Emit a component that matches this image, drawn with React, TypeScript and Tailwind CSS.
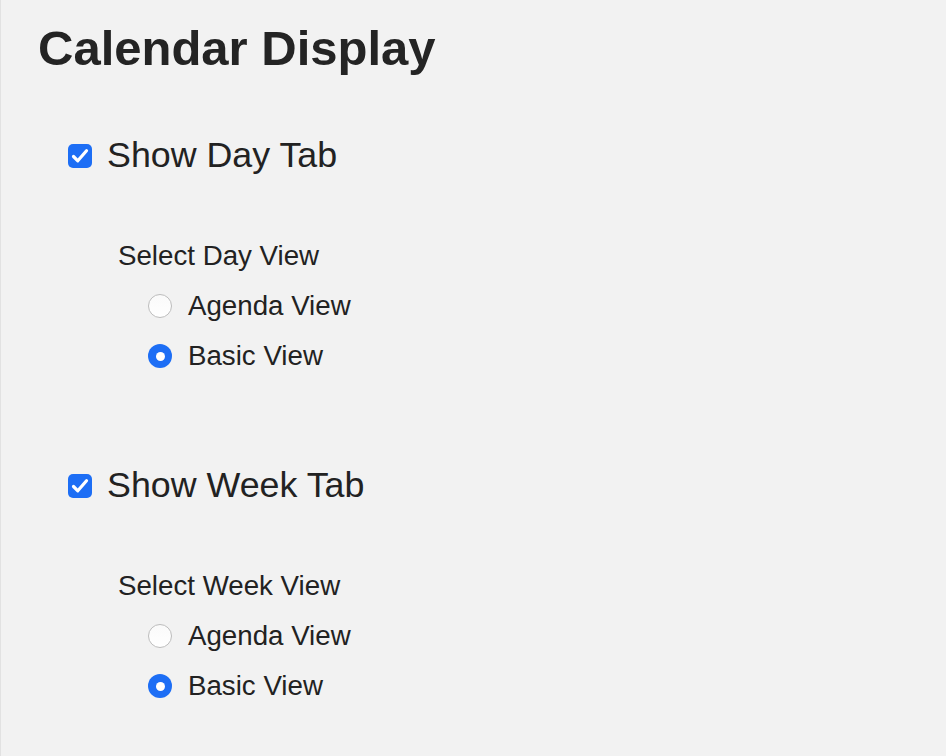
import React from "react";

const font = { fontFamily: '"Liberation Sans", Arial, Helvetica, sans-serif' };

function Checkbox() {
  return (
    <div className="w-[24px] h-[24px] rounded-[5px] bg-[#1d6ef5] flex items-center justify-center shrink-0">
      <svg width="24" height="24" viewBox="0 0 24 24" fill="none">
        <path d="M5.5 12.5 L9.8 16.8 L18.5 6.8" stroke="white" strokeWidth="3.2" strokeLinecap="round" strokeLinejoin="round" />
      </svg>
    </div>
  );
}

function Radio({ checked }: { checked: boolean }) {
  if (checked) {
    return (
      <div className="w-[24px] h-[24px] rounded-full bg-[#1d6ef5] flex items-center justify-center shrink-0">
        <div className="w-[9px] h-[9px] rounded-full bg-white" />
      </div>
    );
  }
  return (
    <div className="w-[24px] h-[24px] rounded-full bg-gradient-to-b from-[#fafafa] to-white border border-[#bdbdbd] shrink-0" />
  );
}

function Section({ title, select }: { title: string; select: string }) {
  return (
    <div>
      <div className="h-[50px] flex items-center pl-[68px]">
        <Checkbox />
        <span className="ml-[15px] text-[35.8px] text-[#222]">{title}</span>
      </div>
      <div className="mt-[50px] h-[50px] flex items-center pl-[118px]">
        <span className="text-[27.7px] text-[#222]">{select}</span>
      </div>
      <div className="h-[50px] flex items-center pl-[148px]">
        <Radio checked={false} />
        <span className="ml-[16px] text-[27.7px] text-[#222]">Agenda View</span>
      </div>
      <div className="h-[50px] flex items-center pl-[148px]">
        <Radio checked={true} />
        <span className="ml-[16px] text-[27.7px] text-[#222]">Basic View</span>
      </div>
    </div>
  );
}

export default function App() {
  return (
    <div className="min-h-screen w-full bg-[#f2f2f2] shadow-[inset_1px_0_0_#e2e2e2]" style={font}>
      <div className="h-[96px] flex items-center pl-[38px]">
        <h1 className="text-[49px] font-bold text-[#242424] leading-none">Calendar Display</h1>
      </div>
      <div className="mt-[35px]">
        <Section title="Show Day Tab" select="Select Day View" />
      </div>
      <div className="mt-[80px]">
        <Section title="Show Week Tab" select="Select Week View" />
      </div>
    </div>
  );
}
